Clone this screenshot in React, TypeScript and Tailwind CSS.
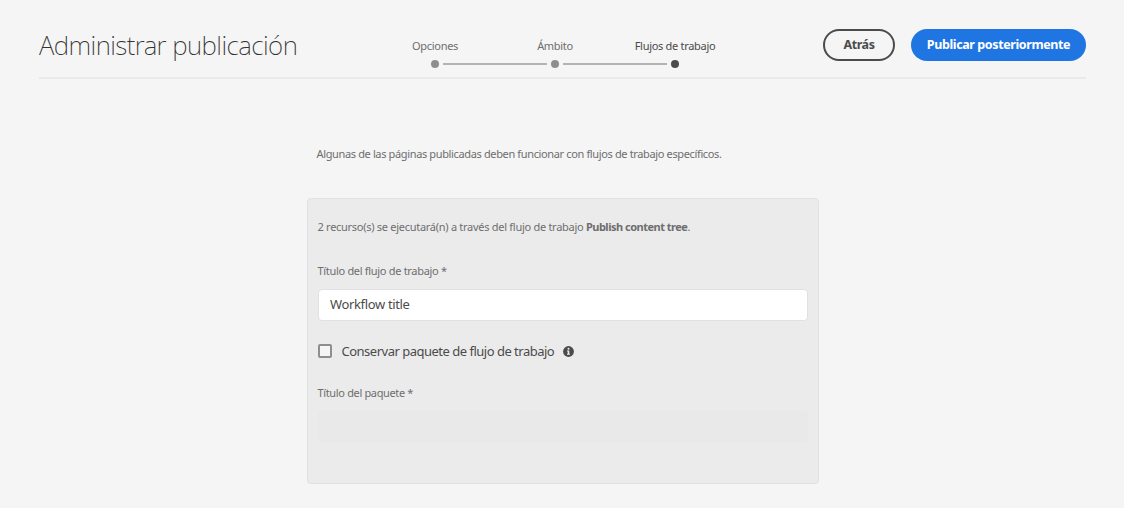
import React from 'react';

const steps = ['Opciones', 'Ámbito', 'Flujos de trabajo'];

function Steps() {
  return (
    <ol className="absolute left-[336px] top-[39px] flex text-[11px] leading-[14px] tracking-[-0.3px]">
      {steps.map((label, i) => {
        const active = i === steps.length - 1;
        return (
          <li key={label} className="flex w-[120px] flex-col items-center">
            <span className={active ? 'whitespace-nowrap text-[#4b4b4b]' : 'whitespace-nowrap text-[#6e6e6e]'}>{label}</span>
            <div className="mt-[7px] flex h-2 w-full items-center justify-between">
              <span className={i > 0 ? 'h-[2px] w-[52px] bg-[#b3b3b3]' : 'h-[2px] w-[52px]'} />
              <span className={active ? 'size-2 rounded-full bg-[#4b4b4b]' : 'size-2 rounded-full bg-[#8e8e8e]'} />
              <span className={active ? 'h-[2px] w-[52px]' : 'h-[2px] w-[52px] bg-[#b3b3b3]'} />
            </div>
          </li>
        );
      })}
    </ol>
  );
}

function InfoIcon() {
  return (
    <svg className="ml-[9px] size-[11px]" viewBox="0 0 11 11" aria-label="Información">
      <circle cx="5.5" cy="5.5" r="5.4" fill="#4b4b4b" />
      <circle cx="5.5" cy="2.7" r="1" fill="#ebebeb" />
      <path d="M4 4.5h2.3v3.3H7v1H4v-1h.7V5.5H4z" fill="#ebebeb" />
    </svg>
  );
}

export default function App() {
  return (
    <div className="h-[508px] w-[1124px] overflow-hidden bg-[#f5f5f5] font-['Noto_Sans','Open_Sans',sans-serif] text-[#6e6e6e]">
      <header className="relative ml-[39px] flex h-[79px] w-[1047px] items-start justify-between border-b-2 border-[#eaeaea]">
        <h1 className="mt-[28px] whitespace-nowrap text-[26px] font-extralight leading-[34px] tracking-[-0.56px] text-[#323232]">Administrar publicación</h1>
        <Steps />
        <div className="mt-[29px] flex gap-4 font-bold">
          <button className="h-8 w-[72px] rounded-full border-2 border-[#4b4b4b] text-[12.5px] tracking-[-0.4px] text-[#4b4b4b]">Atrás</button>
          <button className="h-8 w-[175px] whitespace-nowrap rounded-full bg-[#1f76e3] text-[12.5px] tracking-[-0.39px] text-white">Publicar posteriormente</button>
        </div>
      </header>
      <main className="ml-[307px] w-[512px] pt-[67px]">
        <p className="ml-[9.5px] whitespace-nowrap text-[11px] leading-4 tracking-[-0.36px]">Algunas de las páginas publicadas deben funcionar con flujos de trabajo específicos.</p>
        <section className="mt-[36px] h-[286px] rounded-[4px] border border-[#e1e1e1] bg-[#ebebeb] px-[10px] pt-[20px]">
          <p className="-ml-[0.5px] whitespace-nowrap text-[11px] leading-4 tracking-[-0.28px]">
            <span>2 recurso(s) se ejecutará(n) a través del flujo de trabajo </span>
            <b className="tracking-[-0.5px]">Publish content tree</b>.
          </p>
          <label className="-ml-[0.5px] mt-[28px] block text-[11px] leading-4 tracking-[-0.31px]"><span>Título del flujo de trabajo *</span></label>
          <input className="mt-[10px] block h-8 w-[490px] rounded-[4px] border border-[#e1e1e1] bg-white px-[11px] pb-[2px] text-[13px] tracking-[-0.35px] text-[#4b4b4b] outline-none" defaultValue="Workflow title" />
          <div className="mt-[20px] flex h-5 items-center">
            <span className="size-[14px] rounded-[2px] border-2 border-[#8e8e8e] bg-[#f5f5f5]" />
            <span className="ml-[9.5px] mt-[2px] whitespace-nowrap text-[13px] tracking-[-0.5px] text-[#4b4b4b]">Conservar paquete de flujo de trabajo</span>
            <InfoIcon />
          </div>
          <label className="-ml-[0.5px] mt-[24px] block text-[11px] leading-4 tracking-[-0.35px]"><span>Título del paquete *</span></label>
          <input disabled className="mt-[10px] block h-8 w-[490px] rounded-[4px] bg-[#e9e9e9]" />
        </section>
      </main>
    </div>
  );
}
